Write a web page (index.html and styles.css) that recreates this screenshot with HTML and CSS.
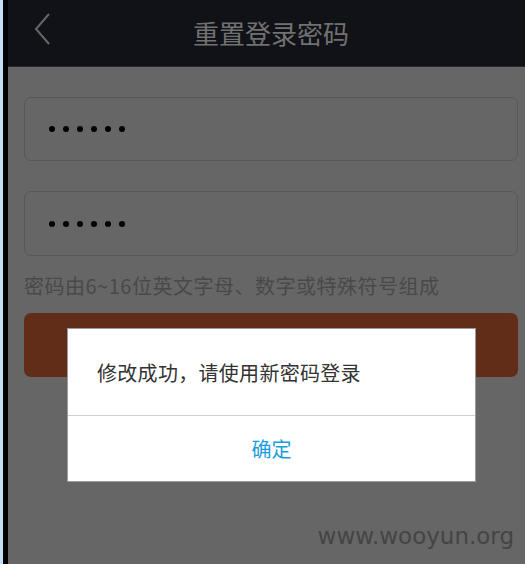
FILE: index.html
```html
<!DOCTYPE html>
<html lang="zh">
<head>
<meta charset="utf-8">
<title>重置登录密码</title>
<link rel="stylesheet" href="styles.css">
</head>
<body>
<div class="frame">
  <div class="edge-blue"></div>
  <div class="edge-black"></div>
  <div class="app">
    <header class="topbar">
      <svg class="back" width="20" height="34" viewBox="0 0 20 34">
        <polyline points="15,2 2,17 15,32" fill="none" stroke="#666" stroke-width="2"/>
      </svg>
      <h1 class="title">重置登录密码</h1>
    </header>
    <main class="content">
      <div class="field"><span class="dots"><i></i><i></i><i></i><i></i><i></i><i></i></span></div>
      <div class="field"><span class="dots"><i></i><i></i><i></i><i></i><i></i><i></i></span></div>
      <p class="hint">密码由6~16位英文字母、数字或特殊符号组成</p>
      <div class="submit"></div>
      <div class="watermark">www.wooyun.org</div>
    </main>
    <div class="dialog">
      <div class="dialog-msg">修改成功，请使用新密码登录</div>
      <div class="dialog-btn">确定</div>
    </div>
  </div>
</div>
</body>
</html>
```

FILE: styles.css
```css
html, body {
  margin: 0;
  padding: 0;
  height: 564px;
  overflow: hidden;
  background: #666666;
}
.frame {
  display: flex;
  height: 564px;
  width: 540px;
}
.edge-blue {
  width: 3px;
  flex: none;
  background: #c4ddf6;
}
.edge-black {
  width: 5px;
  flex: none;
  background: #000;
}
.app {
  position: relative;
  width: 526px;
  flex: none;
  background: #666666;
  font-family: "Noto Sans CJK SC", "Liberation Sans", sans-serif;
}
.topbar {
  height: 66px;
  background: #111217;
  border-bottom: 1px solid #2a2a2c;
  display: flex;
  align-items: center;
  justify-content: center;
  position: relative;
}
.back {
  position: absolute;
  left: 26px;
  top: 12px;
}
.title {
  margin: 0;
  font-size: 26px;
  font-weight: normal;
  color: #717171;
  line-height: 1;
  letter-spacing: 0;
}
.content {
  padding: 30px 16px 0;
  display: flex;
  flex-direction: column;
}
.field {
  height: 62px;
  border: 1px solid #585858;
  border-radius: 7px;
  display: flex;
  align-items: center;
  padding-left: 24px;
  margin-bottom: 30px;
}
.field + .field {
  height: 63px;
  margin-bottom: 0;
}
.dots {
  display: flex;
  gap: 8px;
  margin-top: 0;
}
.dots i {
  width: 6px;
  height: 6px;
  border-radius: 50%;
  background: #000;
}
.hint {
  margin: 14px 0 0;
  font-size: 20px;
  line-height: 32px;
  color: #494949;
  white-space: nowrap;
  letter-spacing: 0.5px;
}
.submit {
  margin-top: 11px;
  height: 64px;
  border-radius: 7px;
  background: #622d18;
}
.watermark {
  margin-top: 144px;
  align-self: flex-end;
  margin-right: 4px;
  font-family: "DejaVu Sans", sans-serif;
  font-size: 23px;
  color: #444444;
  line-height: 30px;
}
.dialog {
  position: absolute;
  left: 59px;
  top: 328px;
  width: 407px;
  background: #fff;
  border: 1px solid #9a9a9a;
  display: flex;
  flex-direction: column;
}
.dialog-msg {
  height: 86px;
  padding-left: 29px;
  display: flex;
  align-items: center;
  font-size: 20px;
  color: #333;
  border-bottom: 1px solid #cfcfcf;
  letter-spacing: 0.3px;
}
.dialog-btn {
  height: 65px;
  display: flex;
  align-items: center;
  justify-content: center;
  font-size: 20px;
  color: #1a9ddf;
}
```
